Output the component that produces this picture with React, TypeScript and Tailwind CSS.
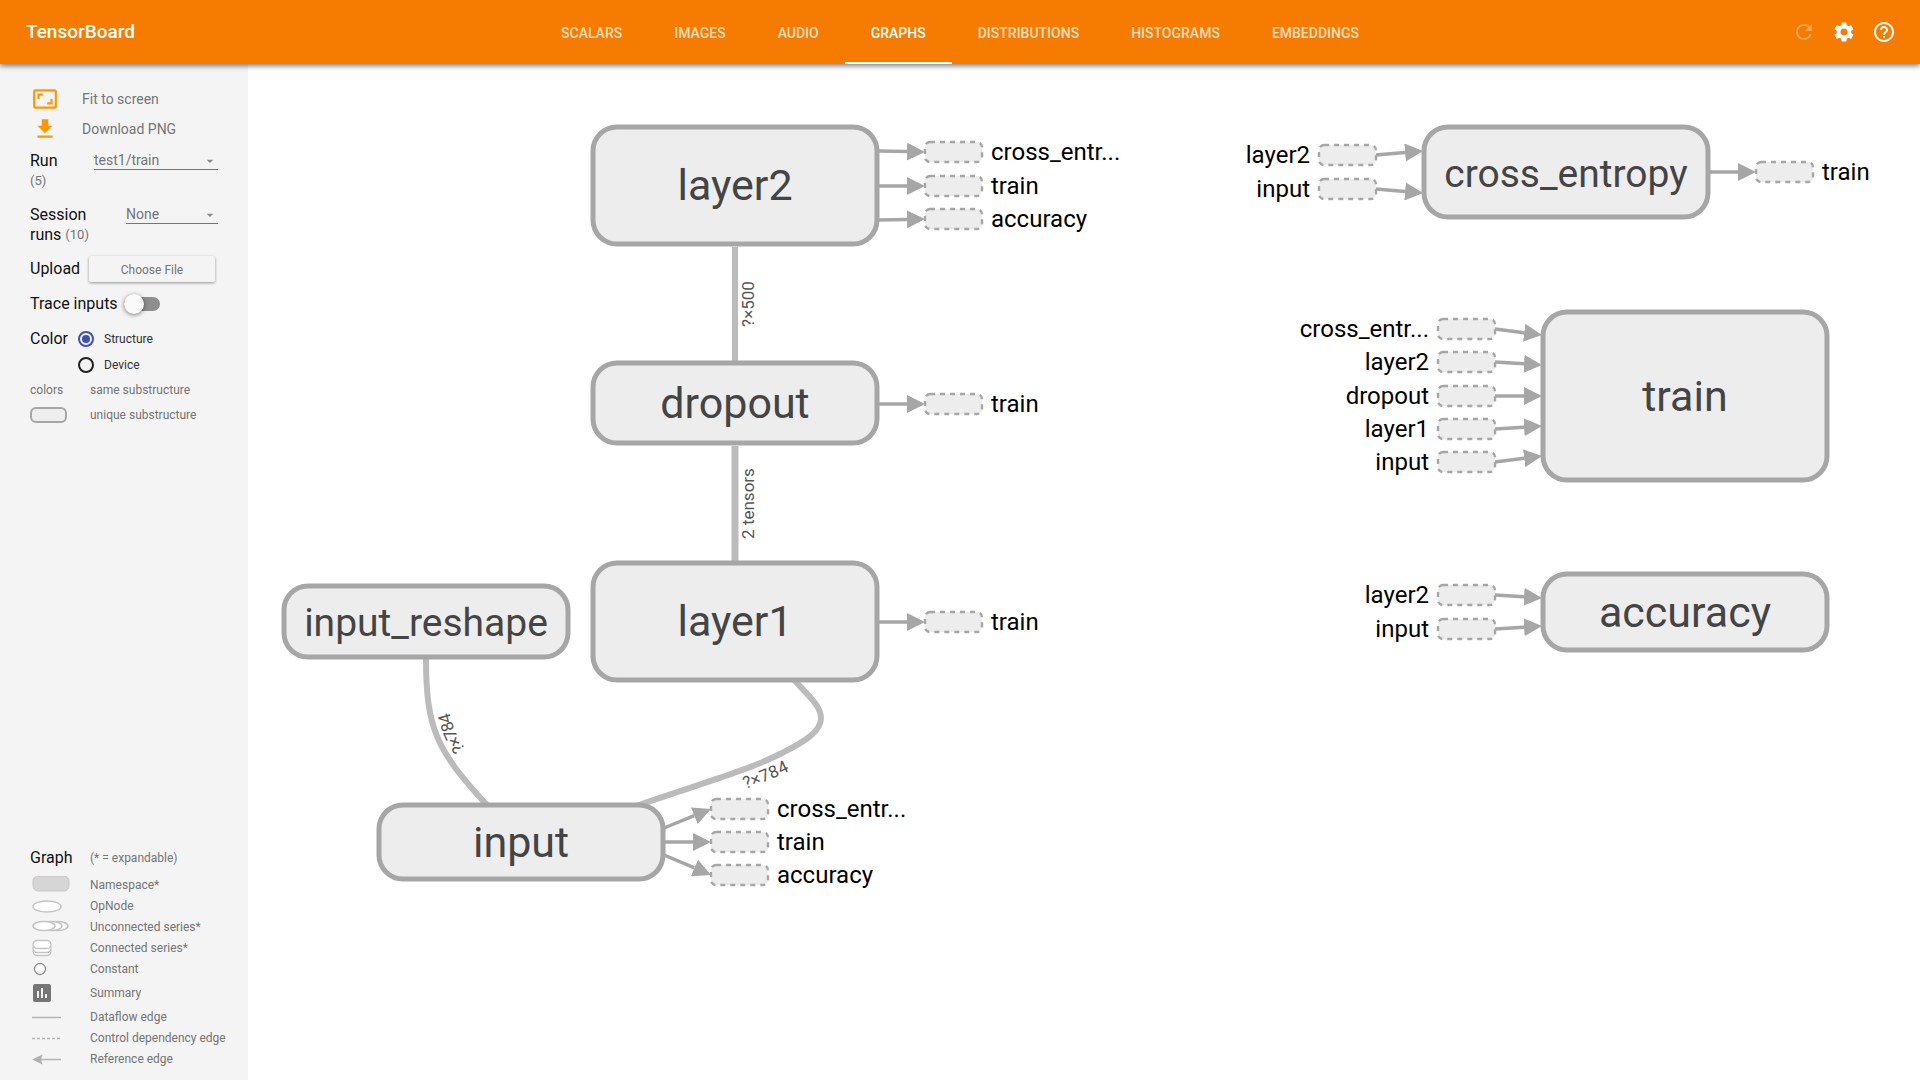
import type { ReactNode } from "react";
import {
  MdArrowDropDown,
  MdAspectRatio,
  MdAssessment,
  MdFileDownload,
  MdHelpOutline,
  MdRefresh,
  MdSettings,
} from "react-icons/md";

const TABS = ["SCALARS", "IMAGES", "AUDIO", "GRAPHS", "DISTRIBUTIONS", "HISTOGRAMS", "EMBEDDINGS"];

function Header() {
  return (
    <header className="relative z-10 grid h-16 shrink-0 grid-cols-[1fr_auto_1fr] bg-[#f57c00] text-white shadow-[0_2px_5px_rgba(0,0,0,0.5)]">
      <h1 className="self-center pl-[26px] text-[19px] font-medium">TensorBoard</h1>
      <nav className="flex" aria-label="Dashboards">
        {TABS.map((tab) => (
          <a
            key={tab}
            href={"#" + tab.toLowerCase()}
            className={
              tab === "GRAPHS"
                ? "flex items-center border-b-2 border-white px-[26px] pt-1 text-[14px] font-medium"
                : "flex items-center border-b-2 border-transparent px-[26px] pt-1 text-[14px] font-medium text-white/75"
            }
          >
            {tab}
          </a>
        ))}
      </nav>
      <div className="flex items-center justify-end pr-4">
        <button type="button" aria-label="Reload" disabled className="flex size-10 items-center justify-center text-white/30">
          <MdRefresh size={24} />
        </button>
        <button type="button" aria-label="Settings" className="flex size-10 items-center justify-center">
          <MdSettings size={24} />
        </button>
        <button type="button" aria-label="Help" className="flex size-10 items-center justify-center">
          <MdHelpOutline size={24} />
        </button>
      </div>
    </header>
  );
}

function Dropdown({ id, value, className }: { id: string; value: string; className: string }) {
  return (
    <div className={"relative " + className}>
      <select
        id={id}
        defaultValue={value}
        className="block h-[19px] w-full appearance-none border-b border-[#757575] bg-transparent text-[14px] leading-[18px] text-[#757575]"
      >
        <option>{value}</option>
      </select>
      <MdArrowDropDown size={16} className="pointer-events-none absolute right-0 top-0.5 text-[#8a8a8a]" />
    </div>
  );
}

function Controls() {
  return (
    <div className="pl-[30px] pr-[30px] pt-5 text-[16px] leading-5 text-[#111]">
      <button type="button" className="flex h-[30px] items-center gap-6 pl-0.5 text-[14px] text-[#757575]">
        <MdAspectRatio size={26} className="text-[#ff9800]" />
        Fit to screen
      </button>
      <button type="button" className="flex h-[30px] items-center gap-6 pl-0.5 text-[14px] text-[#757575]">
        <MdFileDownload size={26} className="text-[#ff9800]" />
        Download PNG
      </button>

      <div className="mt-[7px] flex justify-between">
        <label htmlFor="run">
          Run
          <span className="block text-[13px] text-[#757575]">(5)</span>
        </label>
        <Dropdown id="run" value="test1/train" className="w-[124px]" />
      </div>

      <div className="mt-3.5 flex justify-between">
        <label htmlFor="session">
          <span className="block">Session</span>
          <span className="flex gap-1">
            <span>runs</span>
            <span className="text-[13px] text-[#757575]">(10)</span>
          </span>
        </label>
        <Dropdown id="session" value="None" className="w-[92px]" />
      </div>

      <div className="mt-[11px] flex h-[26px] items-center justify-between">
        <span id="upload">Upload</span>
        <button
          type="button"
          aria-describedby="upload"
          className="mr-[3px] h-[26px] w-[126px] rounded-xs pt-0.5 text-[12px] text-[#757575] shadow-[0_1px_3px_rgba(0,0,0,0.4)]"
        >
          Choose File
        </button>
      </div>

      <div className="mt-3 flex items-center gap-1.5">
        <label htmlFor="trace">Trace inputs</label>
        <input
          id="trace"
          type="checkbox"
          role="switch"
          className="relative h-3.5 w-9 appearance-none rounded-full bg-[#8e8e8e] before:absolute before:-top-[3px] before:left-0 before:size-5 before:rounded-full before:bg-[#fafafa] before:shadow-[0_1px_4px_rgba(0,0,0,0.5)] checked:before:left-4"
        />
      </div>

      <fieldset className="mt-[15px] flex">
        <legend className="float-left w-12">Color</legend>
        <div className="flex flex-col gap-1.5 text-[12px]">
          {["Structure", "Device"].map((name, i) => (
            <label key={name} className="flex items-center gap-2.5 text-[#333]">
              <input
                type="radio"
                name="color"
                defaultChecked={i === 0}
                className="size-4 appearance-none rounded-full border-2 border-[#212121] bg-clip-content p-0.5 checked:border-[#3f51b5] checked:bg-[#3f51b5]"
              />
              {name}
            </label>
          ))}
        </div>
      </fieldset>

      <div className="mt-[5px] grid grid-cols-[60px_1fr] items-center gap-y-[5px] whitespace-nowrap text-[12px] text-[#757575]">
        <span>colors</span>
        <span>same substructure</span>
        <span className="h-4 w-[37px] rounded-[6px] border-2 border-[#a6a6a6] bg-[#eee]" />
        <span>unique substructure</span>
      </div>
    </div>
  );
}

function Glyph({ children }: { children: ReactNode }) {
  return (
    <svg width="40" height="18" viewBox="0 0 40 18" fill="none" aria-hidden="true">
      {children}
    </svg>
  );
}

const LEGEND: { name: string; glyph: ReactNode }[] = [
  { name: "Namespace*", glyph: <rect x="1" y="0" width="36" height="15" rx="5" fill="#d6d6d6" stroke="#c6c6c6" /> },
  { name: "OpNode", glyph: <ellipse cx="15" cy="9.5" rx="14" ry="5.5" fill="#fff" stroke="#c4c4c4" strokeWidth="1.5" /> },
  {
    name: "Unconnected series*",
    glyph: (
      <g fill="#fff" stroke="#c4c4c4" strokeWidth="1.5">
        <ellipse cx="25" cy="8" rx="11" ry="4.5" />
        <ellipse cx="19" cy="8" rx="11" ry="4.5" />
        <ellipse cx="12" cy="8" rx="11" ry="4.5" />
      </g>
    ),
  },
  {
    name: "Connected series*",
    glyph: (
      <g fill="#fff" stroke="#c4c4c4" strokeWidth="1.300">
        <rect x="1" y="7.5" width="18" height="9" rx="4.5" />
        <rect x="1" y="4.5" width="18" height="9" rx="4.5" />
        <rect x="1" y="1.5" width="18" height="8" rx="4" />
      </g>
    ),
  },
  { name: "Constant", glyph: <circle cx="8" cy="9" r="5.5" fill="#fff" stroke="#8c8c8c" strokeWidth="1.300" /> },
  { name: "Summary", glyph: null },
  { name: "Dataflow edge", glyph: <path d="M0 9.5H29" stroke="#b4b4b4" strokeWidth="1.5" /> },
  {
    name: "Control dependency edge",
    glyph: <path d="M0 9.5H28" stroke="#b4b4b4" strokeWidth="1.5" strokeDasharray="3 2" />,
  },
  {
    name: "Reference edge",
    glyph: (
      <g>
        <path d="M7 9.5H29" stroke="#b4b4b4" strokeWidth="1.5" />
        <path d="M0 9.5L10.500 4.500L9 9.500L10.500 14.500Z" fill="#b0b0b0" />
      </g>
    ),
  },
];

function Legend() {
  return (
    <div className="pb-[11px] pl-[30px] text-[12px] leading-5 text-[#757575]">
      <div className="grid grid-cols-[60px_1fr] items-center">
        <h2 className="text-[16px] text-[#111]">Graph</h2>
        <span>(* = expandable)</span>
      </div>
      <ul className="mt-1.5">
        {LEGEND.map(({ name, glyph }) => (
          <li
            key={name}
            className={
              name === "Summary"
                ? "grid h-[27px] grid-cols-[58px_1fr] items-center pl-0.5"
                : "grid h-[21px] grid-cols-[58px_1fr] items-center pl-0.5"
            }
          >
            {glyph ? <Glyph>{glyph}</Glyph> : <MdAssessment size={24} className="-ml-0.5 text-[#757575]" />}
            <span className="whitespace-nowrap">{name}</span>
          </li>
        ))}
      </ul>
    </div>
  );
}

/* Graph coordinates are in user units of the scene's viewBox. */
const NODE_WIDTH = 284;
const NODES = [
  { name: "layer2", x: 593, y: 127, h: 117 },
  { name: "dropout", x: 593, y: 363, h: 80 },
  { name: "layer1", x: 593, y: 563, h: 117 },
  { name: "input_reshape", x: 284, y: 586, h: 71 },
  { name: "input", x: 379, y: 805, h: 74 },
  { name: "cross_entropy", x: 1424, y: 127, h: 90 },
  { name: "train", x: 1543, y: 312, h: 168 },
  { name: "accuracy", x: 1543, y: 574, h: 76 },
];

/* y is the stub's centre, edgeY where its arrow meets the node. */
const OUTPUTS = [
  { name: "cross_entr...", x: 880, y: 152, edgeY: 151 },
  { name: "train", x: 880, y: 186, edgeY: 186 },
  { name: "accuracy", x: 880, y: 219, edgeY: 220 },
  { name: "train", x: 880, y: 404, edgeY: 404 },
  { name: "train", x: 880, y: 622, edgeY: 622 },
  { name: "cross_entr...", x: 666, y: 809, edgeY: 828 },
  { name: "train", x: 666, y: 842, edgeY: 842 },
  { name: "accuracy", x: 666, y: 875, edgeY: 855 },
  { name: "train", x: 1711, y: 172, edgeY: 172 },
];

const INPUTS = [
  { name: "layer2", x: 1422, y: 155, edgeY: 151 },
  { name: "input", x: 1422, y: 189, edgeY: 193 },
  { name: "cross_entr...", x: 1541, y: 329, edgeY: 335 },
  { name: "layer2", x: 1541, y: 362, edgeY: 365 },
  { name: "dropout", x: 1541, y: 396, edgeY: 396 },
  { name: "layer1", x: 1541, y: 429, edgeY: 426 },
  { name: "input", x: 1541, y: 462, edgeY: 456 },
  { name: "layer2", x: 1541, y: 595, edgeY: 598 },
  { name: "input", x: 1541, y: 629, edgeY: 626 },
];

const EDGES = [
  { id: "e1", label: "?×500", width: 6, at: "50%", d: "M735 361V247" },
  { id: "e2", label: "2 tensors", width: 7, at: "50%", d: "M735 561V446" },
  { id: "e3", label: "?×784", width: 6, at: "50%", d: "M487 805C436 750 426 728 426 658" },
  {
    id: "e4",
    label: "?×784",
    width: 6,
    at: "51%",
    d: "M636 806C690 787 750 770 782 753C806 741 821 731 821 718C821 706 808 695 794 680",
  },
];

function Stub({ x, y }: { x: number; y: number }) {
  return (
    <rect x={x} y={y - 10} width="57" height="20" rx="5" fill="#ededed" stroke="#a6a6a6" strokeWidth="2.400" strokeDasharray="5 5" />
  );
}

/* A line from the first point that ends in an arrowhead whose tip is the second. */
function Arrow({ x1, y1, x2, y2 }: { x1: number; y1: number; x2: number; y2: number }) {
  const len = Math.hypot(x2 - x1, y2 - y1);
  const t = (len - 18) / len;
  return (
    <path
      d={`M${x1} ${y1}L${x1 + (x2 - x1) * t} ${y1 + (y2 - y1) * t}`}
      stroke="#a6a6a6"
      strokeWidth="3.500"
      markerEnd="url(#arrow)"
    />
  );
}

function Graph() {
  return (
    <svg viewBox="248 64 1672 1016" className="size-full" role="img" aria-label="Model graph">
      <defs>
        <marker id="arrow" markerUnits="userSpaceOnUse" markerWidth="18" markerHeight="18" refX="0" refY="9" orient="auto">
          <path d="M0 0L18 9L0 18Z" fill="#a6a6a6" />
        </marker>
      </defs>

      {EDGES.map((e) => (
        <g key={e.id}>
          <path id={e.id} d={e.d} fill="none" stroke="#bbb" strokeWidth={e.width} />
          <text dy="19" textAnchor="middle" className="fill-[#555] text-[17px]">
            <textPath href={"#" + e.id} startOffset={e.at}>
              {e.label}
            </textPath>
          </text>
        </g>
      ))}

      {OUTPUTS.map((o, i) => (
        <g key={i}>
          <Arrow x1={o.x - 2} y1={o.edgeY} x2={o.x + 45} y2={o.y} />
          <Stub x={o.x + 45} y={o.y} />
          <text x={o.x + 111} y={o.y + 8} className="fill-black text-[24px]">
            {o.name}
          </text>
        </g>
      ))}

      {INPUTS.map((n, i) => (
        <g key={i}>
          <Arrow x1={n.x - 46} y1={n.y} x2={n.x + 1} y2={n.edgeY} />
          <Stub x={n.x - 103} y={n.y} />
          <text x={n.x - 112} y={n.y + 8} textAnchor="end" className="fill-black text-[24px]">
            {n.name}
          </text>
        </g>
      ))}

      {NODES.map((n) => (
        <g key={n.name}>
          <rect x={n.x} y={n.y} width={NODE_WIDTH} height={n.h} rx="24" fill="#ededed" stroke="#a6a6a6" strokeWidth="5" />
          <text
            x={n.x + NODE_WIDTH / 2}
            y={Math.floor(n.y + n.h / 2) + 15}
            textAnchor="middle"
            className={n.name.length > 10 ? "fill-[#444] text-[39px]" : "fill-[#444] text-[43px]"}
          >
            {n.name}
          </text>
        </g>
      ))}
    </svg>
  );
}

export default function App() {
  return (
    <div className="flex h-screen flex-col bg-white font-['Roboto',sans-serif]">
      <Header />
      <div className="flex min-h-0 flex-1">
        <aside className="flex w-[248px] shrink-0 flex-col justify-between bg-[#f4f4f4]">
          <Controls />
          <Legend />
        </aside>
        <main className="min-w-0 flex-1">
          <Graph />
        </main>
      </div>
    </div>
  );
}
